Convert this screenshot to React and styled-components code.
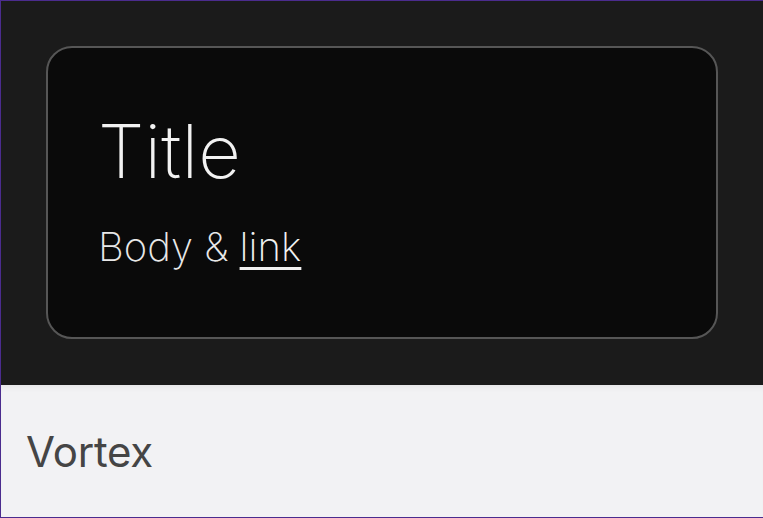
import React from "react";
import styled, { createGlobalStyle } from "styled-components";

const Global = createGlobalStyle`
  html, body { margin: 0; padding: 0; background: #1b1b1b; }
  body { font-family: Inter, "Noto Sans", sans-serif; }
  * { box-sizing: border-box; }
`;

const Frame = styled.div`
  width: 763px;
  height: 518px;
  display: flex;
  flex-direction: column;
  border-top: 1px solid #4b2c8e;
  border-left: 1px solid #4b2c8e;
  border-bottom: 1px solid #4b2c8e;
  overflow: hidden;
`;

const Stage = styled.section`
  background: #1b1b1b;
  padding: 45px;
  height: 384px;
  flex: none;
`;

const Card = styled.div`
  height: 293px;
  background: #0a0a0a;
  border: 2px solid #565656;
  border-radius: 26px;
  padding: 60px 50px 0;
  color: #f2f2f2;
`;

const Title = styled.h1`
  margin: 0;
  font-weight: 250;
  font-size: 74px;
  line-height: 87px;
  letter-spacing: 0.2px;
`;

const Body = styled.p`
  margin: 28px 0 0;
  font-weight: 250;
  font-size: 40px;
  line-height: 48px;
  letter-spacing: 0;
  color: #e8e8e8;
`;

const Link = styled.a`
  color: #f2f2f2;
  text-decoration: underline;
  text-decoration-thickness: 3px;
  text-underline-offset: 6px;
`;

const Footer = styled.footer`
  flex: 1;
  background: #f2f2f4;
  box-shadow: inset 0 6px 6px -4px rgba(0, 0, 0, 0.06);
  display: flex;
  align-items: center;
  padding: 0 25px;
`;

const Brand = styled.span`
  font-size: 42px;
  font-weight: 400;
  color: #454545;
  letter-spacing: -0.2px;
`;

export default function App() {
  return (
    <>
      <Global />
      <Frame>
        <Stage>
          <Card>
            <Title>Title</Title>
            <Body>
              Body &amp; <Link href="#">link</Link>
            </Body>
          </Card>
        </Stage>
        <Footer>
          <Brand>Vortex</Brand>
        </Footer>
      </Frame>
    </>
  );
}
